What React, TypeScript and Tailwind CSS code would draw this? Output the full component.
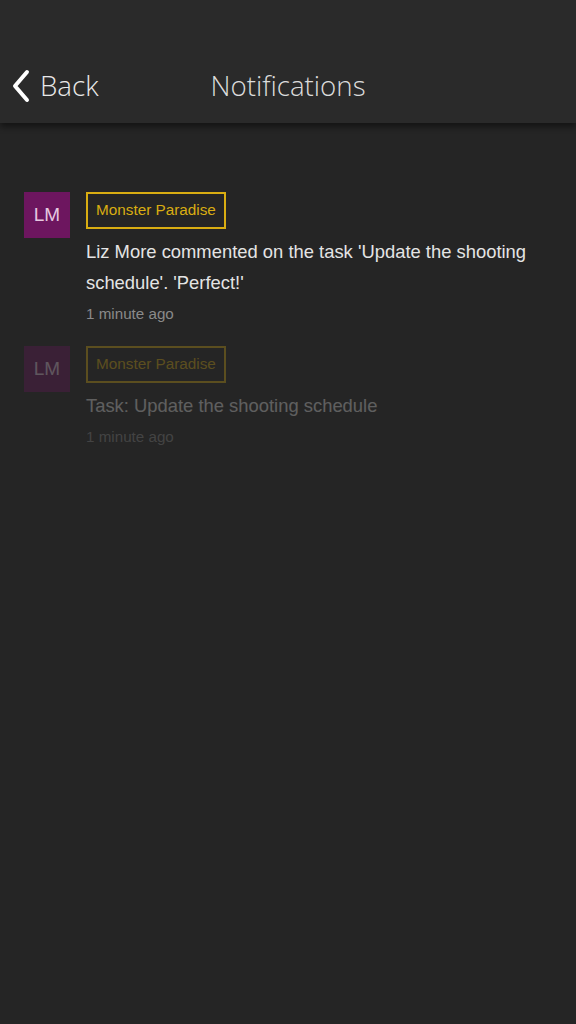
import React from 'react';

interface Notice {
  initials: string;
  project: string;
  text: string;
  time: string;
  read: boolean;
}

const notices: Notice[] = [
  {
    initials: 'LM',
    project: 'Monster Paradise',
    text: "Liz More commented on the task 'Update the shooting schedule'. 'Perfect!'",
    time: '1 minute ago',
    read: false,
  },
  {
    initials: 'LM',
    project: 'Monster Paradise',
    text: 'Task: Update the shooting schedule',
    time: '1 minute ago',
    read: true,
  },
];

function NoticeRow({ n }: { n: Notice }) {
  return (
    <div className={`flex gap-4 ${n.read ? 'opacity-30' : ''}`}>
      <div className="w-[46px] h-[46px] shrink-0 bg-[#6d165f] flex items-center justify-center text-[19px] text-[#e6c8e0] font-['Liberation_Sans',sans-serif]">
        {n.initials}
      </div>
      <div className="flex flex-col items-start font-['Liberation_Sans',sans-serif] pr-6">
        <div className="border-2 border-[#d9ad12] px-[8px] h-[37px] flex items-center text-[15.3px] text-[#d9ad12]">
          {n.project}
        </div>
        <p className="mt-[7px] text-[18.4px] leading-[31px] text-[#e4e4e4]">{n.text}</p>
        <p className="mt-[6px] text-[15.2px] leading-[20px] text-[#8a8a8a]">{n.time}</p>
      </div>
    </div>
  );
}

export default function App() {
  return (
    <div className="min-h-[1024px] w-full bg-[#252525] font-['Open_Sans',sans-serif]">
      <header className="relative h-[123px] bg-[#2a2a2a] shadow-[0_4px_6px_rgba(0,0,0,0.45)] flex items-end pb-[16px]">
        <div className="flex items-center pl-[10px] text-white">
          <svg width="22" height="34" viewBox="0 0 22 34" fill="none">
            <path d="M17 3 L5 17 L17 31" stroke="#ffffff" strokeWidth="4" strokeLinecap="round" strokeLinejoin="round" />
          </svg>
          <span className="ml-[8px] text-[27.7px] font-light text-[#e8e8e8]">Back</span>
        </div>
        <h1 className="absolute left-0 right-0 bottom-[16px] text-center text-[27.7px] font-light text-[#dcdcdc]">
          Notifications
        </h1>
      </header>
      <main className="pt-[69px] pl-[24px] flex flex-col gap-[22px]">
        {notices.map((n, i) => (
          <NoticeRow key={i} n={n} />
        ))}
      </main>
    </div>
  );
}
